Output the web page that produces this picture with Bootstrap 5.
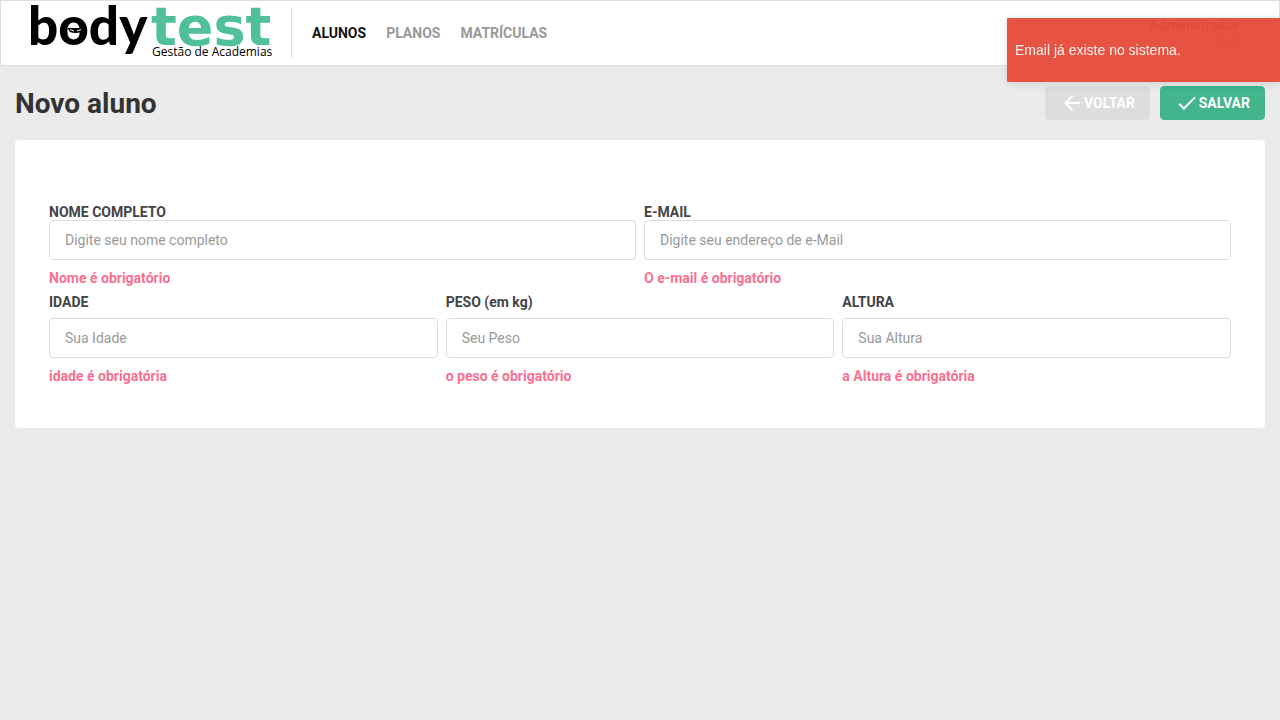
<!DOCTYPE html>
<html lang="pt-BR">
<head>
<meta charset="utf-8">
<meta name="viewport" content="width=device-width, initial-scale=1">
<title>Novo aluno</title>
<link href="https://cdn.jsdelivr.net/npm/bootstrap@5.3.0/dist/css/bootstrap.min.css" rel="stylesheet">
<style>
body { font-family: Roboto, sans-serif; font-size: 14px; line-height: 20px; background: #ebebeb; color: #444; }
.topbar { background: #fff; border: 1px solid #ddd; padding: 7px 40px 7px 30px; }
.brand { border-right: 1px solid #ddd; padding-right: 20px; }
.brand svg { display: block; overflow: visible; }
.topnav { gap: 20px; padding-left: 20px; }
.topnav a { color: #999; font-weight: 700; text-decoration: none; }
.topnav a.active { color: #111; }
.profile { line-height: 16px; }
.profile a { color: #de3b3b; text-decoration: none; }
.page { padding: 20px 15px; }
.page h1 { font-size: 28px; line-height: 34px; font-weight: 700; color: #333; padding-top: 1px; }
.page-head { height: 34px; margin-bottom: 20px; }
.actions { gap: 10px; }
.action { --bs-btn-font-size: 14px; --bs-btn-line-height: 20px; --bs-btn-padding-y: 4px; --bs-btn-padding-x: 14px; --bs-btn-border-radius: 4px; --bs-btn-font-weight: 700; --bs-btn-color: #fff; width: 105px; }
.action-back { --bs-btn-bg: #ddd; --bs-btn-border-color: #ddd; }
.action-save { --bs-btn-bg: #42b58c; --bs-btn-border-color: #42b58c; }
.panel { background: #fff; border-radius: 4px; padding: 64px 34px 42px; }
.fields { --bs-gutter-x: 8px; }
.fields label { display: block; font-weight: 700; margin-bottom: 6px; }
.fields-main { margin-bottom: 4px; }
.fields-main label { line-height: 16px; margin-bottom: 0; }
.fields .form-control { height: 40px; padding: 0 15px; font-size: 14px; border-color: #ddd; border-radius: 4px; }
.fields .form-control::placeholder { color: #999; }
.problem { color: #fb6f91; font-weight: 700; margin-top: 8px; }
.notice { top: 18px; width: 273px; min-height: 64px; padding: 8px; background: #e74c3c; color: rgba(255,255,255,.92); opacity: .96; border-radius: 1px 0 0 1px; font-family: "Liberation Sans", sans-serif; box-shadow: 0 1px 10px rgba(0,0,0,.1), 0 2px 15px rgba(0,0,0,.05); }
</style>
</head>
<body>
<header class="topbar d-flex align-items-center">
  <a href="#" class="brand">
    <svg width="240" height="50" viewBox="0 0 240 50" role="img" aria-label="bodytest Gestão de Academias">
      <text x="-3" y="37" font-family="Lato, sans-serif" font-weight="900" font-size="53" fill="#000">body</text>
      <text x="120" y="37" font-family="DejaVu Sans, sans-serif" font-weight="700" font-size="54" fill="#4fc09a">test</text>
      <path d="M37 20h15v1l-2 3q-5.500 2-11 0l-2-3z" fill="#000"/>
      <path d="M39 21.500l4 1.500M50 21.500l-4 1.500" stroke="#fff" stroke-width="1"/>
      <text x="121" y="48" font-family="Open Sans, sans-serif" font-size="12" fill="#000">Gestão de Academias</text>
    </svg>
  </a>
  <nav class="topnav d-flex">
    <a href="#" class="active">ALUNOS</a>
    <a href="#">PLANOS</a>
    <a href="#">MATRÍCULAS</a>
  </nav>
  <div class="profile d-flex flex-column text-end ms-auto">
    <strong>Administrador</strong>
    <a href="#">Sair</a>
  </div>
</header>

<main class="page">
  <form>
    <div class="page-head d-flex justify-content-between align-items-center">
      <h1 class="m-0">Novo aluno</h1>
      <div class="actions d-flex">
        <button type="button" class="btn action action-back d-flex align-items-center justify-content-end">
          <svg width="24" height="24" viewBox="0 0 24 24" fill="#fff" aria-hidden="true"><path d="M20 11H7.830l5.590-5.590L12 4l-8 8 8 8 1.410-1.410L7.830 13H20v-2z"/></svg>VOLTAR
        </button>
        <button type="submit" class="btn action action-save d-flex align-items-center justify-content-end">
          <svg width="24" height="24" viewBox="0 0 24 24" fill="#fff" aria-hidden="true"><path d="M9 16.170L4.830 12l-1.420 1.410L9 19 21 7l-1.410-1.410z"/></svg>SALVAR
        </button>
      </div>
    </div>
    <div class="panel">
      <div class="row fields fields-main">
        <div class="col-6">
          <label for="nome">NOME COMPLETO</label>
          <input id="nome" type="text" class="form-control" placeholder="Digite seu nome completo">
          <div class="problem">Nome é obrigatório</div>
        </div>
        <div class="col-6">
          <label for="email">E-MAIL</label>
          <input id="email" type="email" class="form-control" placeholder="Digite seu endereço de e-Mail">
          <div class="problem">O e-mail é obrigatório</div>
        </div>
      </div>
      <div class="row fields">
        <div class="col-4">
          <label for="idade">IDADE</label>
          <input id="idade" type="text" class="form-control" placeholder="Sua Idade">
          <div class="problem">idade é obrigatória</div>
        </div>
        <div class="col-4">
          <label for="peso">PESO (em kg)</label>
          <input id="peso" type="text" class="form-control" placeholder="Seu Peso">
          <div class="problem">o peso é obrigatório</div>
        </div>
        <div class="col-4">
          <label for="altura">ALTURA</label>
          <input id="altura" type="text" class="form-control" placeholder="Sua Altura">
          <div class="problem">a Altura é obrigatória</div>
        </div>
      </div>
    </div>
  </form>
</main>

<div class="notice position-fixed end-0 d-flex align-items-center" role="alert">Email já existe no sistema.</div>
<script src="https://cdn.jsdelivr.net/npm/bootstrap@5.3.0/dist/js/bootstrap.bundle.min.js"></script>
</body>
</html>
